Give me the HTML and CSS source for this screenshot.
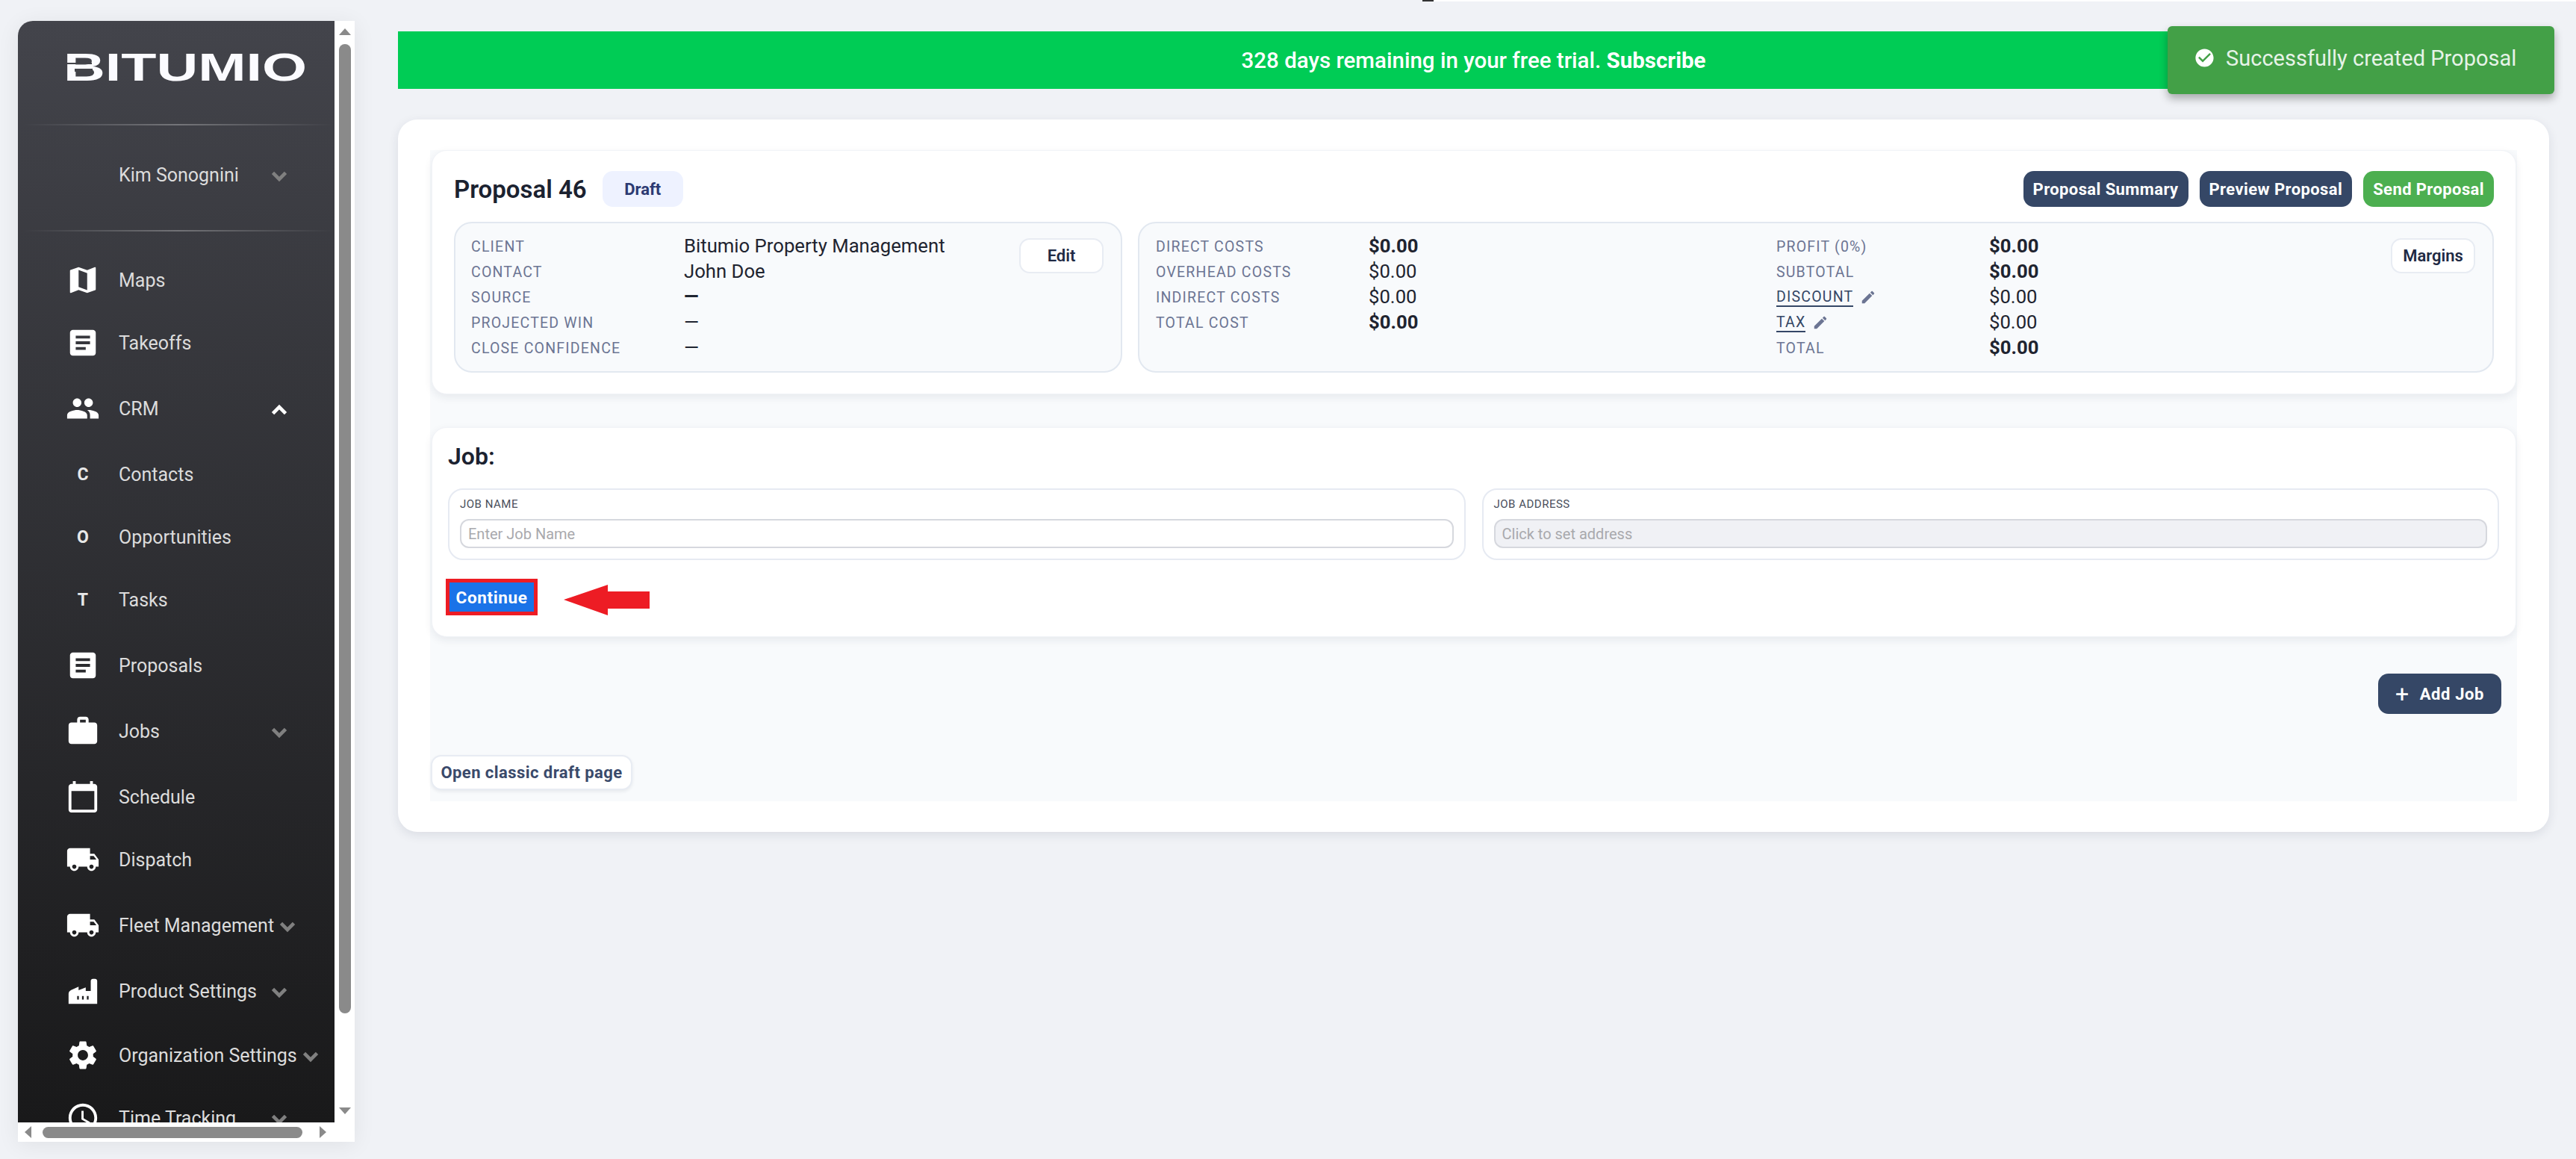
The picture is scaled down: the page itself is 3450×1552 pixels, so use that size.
FILE: index.html
```html
<!DOCTYPE html>
<html lang="en">
<head>
  <meta charset="UTF-8" />
  <title>Proposal 46 | Bitumio</title>
  <link rel="stylesheet" href="styles.css">
</head>
<body>
  <svg class="sprites" aria-hidden="true">
    <symbol id="i-map" viewBox="0 0 24 24"><path d="M20.5 3l-.16.03L15 5.1 9 3 3.36 4.9c-.21.07-.36.25-.36.48V20.5c0 .28.22.5.5.5l.16-.03L9 18.9l6 2.1 5.64-1.9c.21-.07.36-.25.36-.48V3.5c0-.28-.22-.5-.5-.5zM15 19l-6-2.11V5l6 2.11V19z"/></symbol>
    <symbol id="i-article" viewBox="0 0 24 24"><path d="M19 3H5c-1.1 0-2 .9-2 2v14c0 1.1.9 2 2 2h14c1.1 0 2-.9 2-2V5c0-1.1-.9-2-2-2zm-5 14H7v-2h7v2zm3-4H7v-2h10v2zm0-4H7V7h10v2z"/></symbol>
    <symbol id="i-people" viewBox="0 0 24 24"><path d="M16 11c1.66 0 2.99-1.34 2.99-3S17.66 5 16 5c-1.66 0-3 1.34-3 3s1.34 3 3 3zm-8 0c1.66 0 2.99-1.34 2.99-3S9.66 5 8 5C6.34 5 5 6.34 5 8s1.34 3 3 3zm0 2c-2.33 0-7 1.17-7 3.5V19h14v-2.5c0-2.33-4.67-3.5-7-3.5zm8 0c-.29 0-.62.02-.97.05 1.16.84 1.97 1.97 1.97 3.45V19h6v-2.5c0-2.33-4.67-3.5-7-3.5z"/></symbol>
    <symbol id="i-work" viewBox="0 0 24 24"><path d="M20 6h-4V4c0-1.11-.89-2-2-2h-4c-1.11 0-2 .89-2 2v2H4c-1.11 0-1.99.89-1.99 2L2 19c0 1.11.89 2 2 2h16c1.11 0 2-.89 2-2V8c0-1.11-.89-2-2-2zm-6 0h-4V4h4v2z"/></symbol>
    <symbol id="i-calendar" viewBox="0 0 24 24"><path d="M20 3h-1V1h-2v2H7V1H5v2H4c-1.1 0-2 .9-2 2v16c0 1.1.9 2 2 2h16c1.1 0 2-.9 2-2V5c0-1.1-.9-2-2-2zm0 18H4V8h16v13z"/></symbol>
    <symbol id="i-truck" viewBox="0 0 24 24"><path d="M20 8h-3V4H3c-1.1 0-2 .9-2 2v11h2c0 1.66 1.34 3 3 3s3-1.34 3-3h6c0 1.66 1.34 3 3 3s3-1.34 3-3h2v-5l-3-4zM6 18.5c-.83 0-1.5-.67-1.5-1.5s.67-1.5 1.5-1.5 1.5.67 1.5 1.5-.67 1.5-1.5 1.5zm13.5-9l1.96 2.5H17V9.5h2.5zm-1.5 9c-.83 0-1.5-.67-1.5-1.5s.67-1.5 1.5-1.5 1.5.67 1.5 1.5-.67 1.5-1.5 1.5z"/></symbol>
    <symbol id="i-factory" viewBox="0 0 24 24"><path fill-rule="evenodd" d="M2 21v-7c0-1.2.7-2.2 1.8-2.7L9 9v2.5l5-2V12h3.5V5c0-.8.7-1.5 1.5-1.5h1.5c.8 0 1.5.7 1.5 1.5v16zM8 15.5v2.5h1.2v-2.5zM11.4 15.5v2.5h1.2v-2.5zM14.8 15.5v2.5H16v-2.5z"/></symbol>
    <symbol id="i-gear" viewBox="0 0 24 24"><path d="M19.14 12.94c.04-.3.06-.61.06-.94 0-.32-.02-.64-.07-.94l2.03-1.58c.18-.14.23-.41.12-.61l-1.92-3.32c-.12-.22-.37-.29-.59-.22l-2.39.96c-.5-.38-1.03-.7-1.62-.94l-.36-2.54c-.04-.24-.24-.41-.48-.41h-3.84c-.24 0-.43.17-.47.41l-.36 2.54c-.59.24-1.13.57-1.62.94l-2.39-.96c-.22-.08-.47 0-.59.22L2.74 8.87c-.12.21-.08.47.12.61l2.03 1.58c-.05.3-.09.63-.09.94s.02.64.07.94l-2.03 1.58c-.18.14-.23.41-.12.61l1.92 3.32c.12.22.37.29.59.22l2.39-.96c.5.38 1.03.7 1.62.94l.36 2.54c.05.24.24.41.48.41h3.84c.24 0 .44-.17.47-.41l.36-2.54c.59-.24 1.13-.56 1.62-.94l2.39.96c.22.08.47 0 .59-.22l1.92-3.32c.12-.22.07-.47-.12-.61l-2.01-1.58zM12 15.6c-1.98 0-3.6-1.62-3.6-3.6s1.62-3.6 3.6-3.6 3.6 1.62 3.6 3.6-1.62 3.6-3.6 3.6z"/></symbol>
    <symbol id="i-clock" viewBox="0 0 24 24"><path d="M11.99 2C6.47 2 2 6.48 2 12s4.47 10 9.99 10C17.52 22 22 17.52 22 12S17.52 2 11.99 2zM12 20c-4.42 0-8-3.58-8-8s3.58-8 8-8 8 3.58 8 8-3.58 8-8 8zm.5-13H11v6l5.25 3.15.75-1.23-4.5-2.67z"/></symbol>
    <symbol id="i-chevron" viewBox="0 0 24 24"><path d="M16.59 8.59L12 13.17 7.41 8.59 6 10l6 6 6-6z"/></symbol>
    <symbol id="i-edit" viewBox="0 0 24 24"><path d="M3 17.25V21h3.75L17.81 9.94l-3.75-3.75L3 17.25zM20.71 7.04c.39-.39.39-1.02 0-1.41l-2.34-2.34c-.39-.39-1.02-.39-1.41 0l-1.83 1.83 3.75 3.75 1.83-1.83z"/></symbol>
    <symbol id="i-check" viewBox="0 0 24 24"><path d="M12 2C6.48 2 2 6.48 2 12s4.48 10 10 10 10-4.48 10-10S17.52 2 12 2zm-2 15l-5-5 1.41-1.41L10 14.17l7.59-7.59L19 8l-9 9z"/></symbol>
  </svg>

  <div class="top-strip"><span class="top-mark"></span><span class="top-rule"></span></div>

  <div class="app">
    <aside class="sidebar">
      <div class="side-dark">
        <svg class="logo" width="318" height="38" viewBox="0 0 318 38">
          <text x="-4" y="38" font-size="52" textLength="326" lengthAdjust="spacingAndGlyphs">BITUMIO</text>
          <rect class="logo-cut" x="0" y="14" width="34" height="2"/>
          <rect class="logo-cut" x="11" y="22" width="24" height="4"/>
        </svg>
        <div class="divider"></div>
        <div class="user-row">
          <span class="nav-ico"></span>
          <span class="nav-label">Kim Sonognini</span>
          <svg class="chev"><use href="#i-chevron"/></svg>
        </div>
        <div class="divider"></div>

        <nav class="nav">
          <a class="nav-item"><span class="nav-ico"><svg><use href="#i-map"/></svg></span><span class="nav-label">Maps</span></a>
          <a class="nav-item tight"><span class="nav-ico"><svg><use href="#i-article"/></svg></span><span class="nav-label">Takeoffs</span></a>
          <a class="nav-item"><span class="nav-ico"><svg><use href="#i-people"/></svg></span><span class="nav-label">CRM</span><svg class="chev open"><use href="#i-chevron"/></svg></a>
          <a class="nav-item"><span class="nav-ico letter">C</span><span class="nav-label">Contacts</span></a>
          <a class="nav-item tight"><span class="nav-ico letter">O</span><span class="nav-label">Opportunities</span></a>
          <a class="nav-item tight"><span class="nav-ico letter">T</span><span class="nav-label">Tasks</span></a>
          <a class="nav-item"><span class="nav-ico"><svg><use href="#i-article"/></svg></span><span class="nav-label">Proposals</span></a>
          <a class="nav-item"><span class="nav-ico"><svg><use href="#i-work"/></svg></span><span class="nav-label">Jobs</span><svg class="chev"><use href="#i-chevron"/></svg></a>
          <a class="nav-item"><span class="nav-ico"><svg><use href="#i-calendar"/></svg></span><span class="nav-label">Schedule</span></a>
          <a class="nav-item tight"><span class="nav-ico"><svg><use href="#i-truck"/></svg></span><span class="nav-label">Dispatch</span></a>
          <a class="nav-item"><span class="nav-ico"><svg><use href="#i-truck"/></svg></span><span class="nav-label">Fleet Management</span><svg class="chev"><use href="#i-chevron"/></svg></a>
          <a class="nav-item"><span class="nav-ico"><svg><use href="#i-factory"/></svg></span><span class="nav-label">Product Settings</span><svg class="chev"><use href="#i-chevron"/></svg></a>
          <a class="nav-item mid"><span class="nav-ico"><svg><use href="#i-gear"/></svg></span><span class="nav-label">Organization Settings</span><svg class="chev"><use href="#i-chevron"/></svg></a>
          <a class="nav-item tight"><span class="nav-ico"><svg><use href="#i-clock"/></svg></span><span class="nav-label">Time Tracking</span><svg class="chev"><use href="#i-chevron"/></svg></a>
        </nav>
      </div>

      <div class="vbar">
        <span class="arrow-up"></span>
        <span class="vthumb"></span>
        <span class="arrow-down"></span>
      </div>
      <div class="hbar">
        <span class="arrow-left"></span>
        <span class="hthumb"></span>
        <span class="arrow-right"></span>
      </div>
    </aside>

    <main class="main">
      <div class="trial-banner">328 days remaining in your free trial.&nbsp;<strong>Subscribe</strong></div>

      <section class="page-card">
        <div class="work-area">
          <div class="summary-card">
            <header class="summary-head">
              <h1>Proposal 46</h1>
              <span class="badge">Draft</span>
              <div class="actions">
                <button type="button" class="btn btn-navy">Proposal Summary</button>
                <button type="button" class="btn btn-navy">Preview Proposal</button>
                <button type="button" class="btn btn-green">Send Proposal</button>
              </div>
            </header>

            <div class="info-row">
              <div class="info-box client-box">
                <dl class="kv">
                  <dt>Client</dt><dd>Bitumio Property Management</dd>
                  <dt>Contact</dt><dd>John Doe</dd>
                  <dt>Source</dt><dd class="strong">—</dd>
                  <dt>Projected Win</dt><dd>—</dd>
                  <dt>Close Confidence</dt><dd>—</dd>
                </dl>
                <button type="button" class="btn-light">Edit</button>
              </div>

              <div class="info-box costs-box">
                <dl class="kv kv-costs">
                  <dt>Direct Costs</dt><dd class="strong">$0.00</dd>
                  <dt>Overhead Costs</dt><dd>$0.00</dd>
                  <dt>Indirect Costs</dt><dd>$0.00</dd>
                  <dt>Total Cost</dt><dd class="strong">$0.00</dd>
                </dl>
                <dl class="kv">
                  <dt>Profit (0%)</dt><dd class="strong">$0.00</dd>
                  <dt>Subtotal</dt><dd class="strong">$0.00</dd>
                  <dt><a class="link">Discount</a><svg class="pencil"><use href="#i-edit"/></svg></dt><dd>$0.00</dd>
                  <dt><a class="link">Tax</a><svg class="pencil"><use href="#i-edit"/></svg></dt><dd>$0.00</dd>
                  <dt>Total</dt><dd class="strong">$0.00</dd>
                </dl>
                <button type="button" class="btn-light">Margins</button>
              </div>
            </div>
          </div>

          <div class="job-card">
            <h2>Job:</h2>
            <div class="job-fields">
              <div class="field">
                <label>Job Name</label>
                <div class="input">Enter Job Name</div>
              </div>
              <div class="field">
                <label>Job Address</label>
                <div class="input disabled">Click to set address</div>
              </div>
            </div>
            <div class="continue-row">
              <div class="callout"><button type="button" class="btn-blue">Continue</button></div>
              <svg class="callout-arrow" width="115" height="41" viewBox="0 0 115 41"><polygon points="0,20 59,0 59,9 115,9 115,32 59,32 59,41"/></svg>
            </div>
          </div>

          <div class="add-row">
            <button type="button" class="btn-add"><span class="plus">+</span>Add Job</button>
          </div>
          <button type="button" class="btn-classic">Open classic draft page</button>
        </div>
      </section>
    </main>
  </div>

  <div class="toast">
    <svg><use href="#i-check"/></svg>
    <span>Successfully created Proposal</span>
  </div>
</body>
</html>
```

FILE: styles.css
```css
* {
  box-sizing: border-box;
}
html, body {
  margin: 0;
  height: 1552px;
  overflow: hidden;
}
body {
  font-family: Roboto, "Liberation Sans", sans-serif;
  background: #f0f2f6;
  color: #1f2430;
}
.sprites {
  display: none;
}
button {
  font-family: inherit;
  cursor: pointer;
}

.top-strip {
  display: flex;
  height: 2px;
  padding-left: 1905px;
}
.top-mark {
  width: 15px;
  background: #333;
}
.top-rule {
  flex: 1;
  background: #fff;
}

.app {
  display: flex;
  align-items: flex-start;
  padding: 26px 0 0 24px;
}

/* sidebar */
.sidebar {
  display: grid;
  grid-template-columns: 424px 27px;
  grid-template-rows: 1475px 26px;
  width: 451px;
  background: #fff;
  border-top-left-radius: 20px;
  box-shadow: 0 4px 30px rgba(0, 0, 0, 0.07);
}
.side-dark {
  overflow: hidden;
  background: linear-gradient(180deg, #43444b 0%, #19191a 100%);
  border-top-left-radius: 20px;
  padding-top: 42px;
}
.logo {
  display: block;
  margin-left: 65px;
  overflow: visible;
}
.logo text {
  font-family: "Liberation Sans", sans-serif;
  font-weight: 700;
  fill: #fbfbff;
}
.logo-cut {
  fill: #424349;
}
.divider {
  height: 2px;
  margin: 58px 0 0 6px;
  background: linear-gradient(90deg, rgba(255,255,255,0), rgba(255,255,255,0.28) 50%, rgba(255,255,255,0));
}
.user-row {
  display: flex;
  align-items: center;
  height: 132px;
  padding-left: 64px;
  font-size: 25px;
  color: #dcdcdc;
}
.user-row + .divider {
  margin-top: 8px;
}
.nav {
  margin-top: 35px;
}
.nav-item {
  display: flex;
  align-items: center;
  height: 60px;
  margin-top: 28px;
  padding-left: 64px;
  font-size: 25px;
  color: #dcdcdc;
}
.nav-item:first-child {
  margin-top: 0;
}
.nav-item.tight {
  margin-top: 24px;
}
.nav-item.mid {
  margin-top: 26px;
}
.nav-ico {
  flex: none;
  display: flex;
  justify-content: center;
  align-items: center;
  width: 46px;
  margin-right: 25px;
}
.nav-ico svg {
  width: 46px;
  height: 46px;
  fill: #fff;
}
.nav-ico.letter {
  font-size: 23px;
  font-weight: 700;
  color: #e8e8e8;
}
.nav-label {
  min-width: 197px;
  white-space: nowrap;
}
.chev {
  flex: none;
  width: 36px;
  height: 36px;
  margin-top: 4px;
  fill: #808080;
  stroke: #808080;
  stroke-width: 1.1;
}
.chev.open {
  fill: #fff;
  stroke: #fff;
  transform: rotate(180deg);
}

.vbar {
  display: flex;
  flex-direction: column;
  padding: 10px 5px 11px 6px;
}
.vthumb {
  height: 1298px;
  margin-top: 12px;
  background: #8a8a8a;
  border-radius: 8px;
}
.arrow-up, .arrow-down {
  width: 0;
  border-left: 8px solid transparent;
  border-right: 8px solid transparent;
}
.arrow-up {
  border-bottom: 9px solid #8a8a8a;
}
.arrow-down {
  margin-top: auto;
  border-top: 9px solid #8a8a8a;
}
.hbar {
  grid-column: 1 / 3;
  display: flex;
  align-items: center;
  padding-left: 9px;
}
.hthumb {
  width: 348px;
  height: 15px;
  margin: 0 23px 0 15px;
  background: #8a8a8a;
  border-radius: 8px;
}
.arrow-left, .arrow-right {
  width: 0;
  border-top: 8px solid transparent;
  border-bottom: 8px solid transparent;
}
.arrow-left {
  border-right: 9px solid #8a8a8a;
}
.arrow-right {
  border-left: 9px solid #8a8a8a;
}

/* main column */
.main {
  width: 2881px;
  margin-left: 58px;
}
.trial-banner {
  display: flex;
  justify-content: center;
  align-items: center;
  height: 77px;
  margin-top: 14px;
  background: #00cc55;
  color: #fff;
  font-size: 29.5px;
  font-weight: 500;
}
.trial-banner strong {
  font-weight: 700;
}
.page-card {
  margin-top: 41px;
  padding: 41px 43px 41px 43px;
  background: #fff;
  border-radius: 26px;
  box-shadow: 0 4px 14px rgba(30, 40, 70, 0.1);
}
.work-area {
  background: #f8fafc;
  padding-bottom: 15px;
}

.summary-card {
  margin: 0 1px 0 2px;
  padding: 27px 29px 28px;
  background: #fff;
  border: 1px solid #f1f3f7;
  border-radius: 20px;
  box-shadow: 0 4px 12px rgba(30, 40, 70, 0.08);
}
.summary-head {
  display: flex;
  align-items: center;
  height: 48px;
}
h1 {
  margin: 0;
  font-size: 33px;
  font-weight: 600;
  color: #1b2230;
}
.badge {
  display: flex;
  align-items: center;
  justify-content: center;
  width: 108px;
  height: 48px;
  margin-left: 21px;
  background: #eef2ff;
  border-radius: 14px;
  color: #2c3a72;
  font-size: 22px;
  font-weight: 700;
}
.actions {
  display: flex;
  gap: 15px;
  margin-left: auto;
}
.btn {
  height: 48px;
  padding: 0 13px;
  border: none;
  border-radius: 14px;
  color: #fff;
  font-size: 22px;
  font-weight: 700;
  letter-spacing: 0.4px;
}
.btn-navy {
  background: #354766;
}
.btn-green {
  background: #4caf50;
}

.info-row {
  display: flex;
  gap: 21px;
  margin-top: 20px;
}
.info-box {
  display: flex;
  align-items: flex-start;
  height: 202px;
  padding: 15px 23px 15px 21px;
  background: #f8fafc;
  border: 2px solid #e2e8f0;
  border-radius: 24px;
}
.client-box {
  flex: none;
  width: 895px;
}
.costs-box {
  flex: 1;
  padding-left: 22px;
}
.kv {
  display: grid;
  grid-template-columns: 285px auto;
  grid-auto-rows: 33.8px;
  align-items: center;
  margin: 0;
}
.kv-costs {
  width: 831px;
}
.kv dt {
  display: flex;
  align-items: center;
  font-size: 19.5px;
  letter-spacing: 1.2px;
  text-transform: uppercase;
  color: #6c7593;
}
.kv dd {
  margin: -3px 0 0;
  font-size: 25.7px;
  color: #1f2430;
}
.kv dd.strong {
  font-weight: 700;
}
.link {
  color: #354766;
  border-bottom: 2px solid #354766;
  line-height: 23px;
}
.pencil {
  width: 22px;
  height: 22px;
  margin-left: 9px;
  fill: #6c7593;
}
.btn-light {
  flex: none;
  width: 113px;
  height: 47px;
  margin: 5px 0 0 auto;
  background: #fff;
  border: 2px solid #e8ecf3;
  border-radius: 14px;
  color: #1f2a44;
  font-size: 22px;
  font-weight: 600;
}

.job-card {
  margin: 44px 1px 0 2px;
  padding: 21px 22px 28px 21px;
  height: 281px;
  background: #fff;
  border: 1px solid #f1f3f7;
  border-radius: 20px;
  box-shadow: 0 4px 12px rgba(30, 40, 70, 0.08);
}
h2 {
  margin: 0;
  height: 60px;
  font-size: 32px;
  line-height: 34px;
  font-weight: 600;
  color: #1b2230;
}
.job-fields {
  display: grid;
  grid-template-columns: 1fr 1fr;
  gap: 22px;
}
.field {
  height: 96px;
  padding: 10px 14px 0;
  background: #fff;
  border: 2px solid #e6eaf2;
  border-radius: 20px;
}
.field label {
  display: block;
  height: 29px;
  font-size: 15px;
  line-height: 19px;
  letter-spacing: 0.5px;
  text-transform: uppercase;
  color: #4a4f5c;
}
.input {
  display: flex;
  align-items: center;
  height: 39px;
  padding-left: 9px;
  border: 2px solid #d6d8de;
  border-radius: 12px;
  color: #a9a9ad;
  font-size: 20px;
}
.input.disabled {
  background: #f0f1f5;
}
.continue-row {
  display: flex;
  gap: 35px;
  margin: 25px 0 0 -3px;
}
.callout {
  width: 123px;
  height: 49px;
  border: 5px solid #ed1c24;
}
.btn-blue {
  display: block;
  width: 113px;
  height: 39px;
  padding: 0;
  background: #1a73e8;
  border: none;
  color: #fff;
  font-size: 22.5px;
  font-weight: 700;
  letter-spacing: 0.6px;
}
.callout-arrow {
  margin-top: 8px;
  fill: #ed1c24;
}

.add-row {
  display: flex;
  justify-content: flex-end;
  padding: 49px 21px 0 0;
}
.btn-add {
  display: flex;
  align-items: center;
  justify-content: center;
  width: 165px;
  height: 54px;
  padding: 0;
  background: #354766;
  border: none;
  border-radius: 14px;
  color: #fff;
  font-size: 22px;
  font-weight: 700;
  letter-spacing: 0.6px;
}
.plus {
  margin-right: 14px;
  font-size: 32px;
  font-weight: 400;
  line-height: 1;
}
.btn-classic {
  display: block;
  width: 270px;
  height: 47px;
  margin: 55px 0 0 1px;
  padding: 0;
  background: #fff;
  border: 2px solid #e8ecf3;
  border-radius: 14px;
  box-shadow: 0 2px 4px rgba(30, 40, 70, 0.08);
  color: #3a4a6b;
  font-size: 22px;
  font-weight: 700;
  letter-spacing: 0.45px;
}

/* toast sits over the banner */
.toast {
  position: absolute;
  left: 2903px;
  top: 35px;
  display: flex;
  align-items: center;
  gap: 14px;
  width: 518px;
  height: 91px;
  padding: 0 0 6px 35px;
  background: #43a047;
  border-radius: 6px;
  box-shadow: 0 6px 12px rgba(0, 0, 0, 0.3);
  color: #e6f3e7;
  font-size: 29px;
}
.toast svg {
  width: 29px;
  height: 29px;
  fill: #fff;
}
```
